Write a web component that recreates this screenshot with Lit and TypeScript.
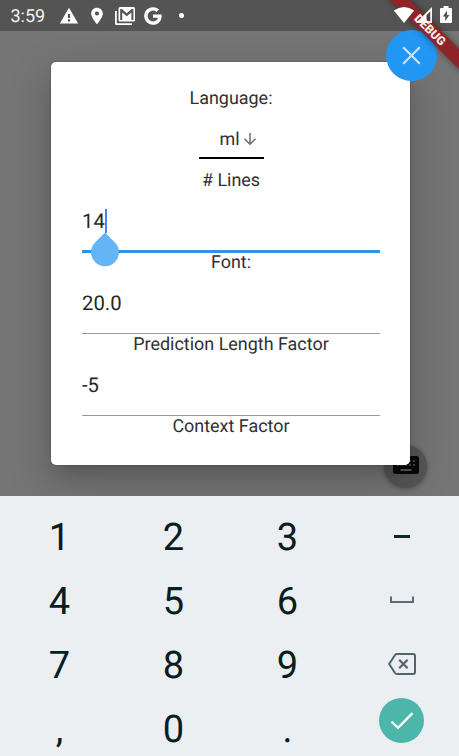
import { LitElement, html, css, svg } from "lit";
import { customElement } from "lit/decorators.js";

const statusIcons = {
  warning: svg`<path fill-rule="evenodd" d="M1 21h22L12 2 1 21zm12.300-2.500h-2.600v-2.500h2.600v2.500zm0-4h-2.600v-5h2.600v5z"/>`,
  pin: svg`<path fill-rule="evenodd" d="M12 2C8.130 2 5 5.130 5 9c0 5.250 7 13 7 13s7-7.750 7-13c0-3.870-3.130-7-7-7zm0 9.500a2.500 2.500 0 1 1 0-5 2.500 2.500 0 0 1 0 5z"/>`,
};

@customElement("status-bar")
class StatusBar extends LitElement {
  static styles = css`
    :host { display: flex; height: 31px; align-items: center; background: #545454; color: #fff; }
    svg { display: block; fill: currentColor; flex: none; }
    .time { width: 48px; margin-left: 10.500px; font-size: 18px; line-height: 31px; color: #f2f2f2; padding-top: 1px; }
    .warn { width: 20px; height: 20px; }
    .pin { width: 20px; height: 20px; margin-left: 8px; }
    .mail { margin-left: 8px; }
    .goog { margin-left: 9px; }
    .dot { width: 5px; height: 5px; border-radius: 50%; background: #fff; margin-left: 17px; }
  `;
  render() {
    return html`
      <div class="time">3:59</div>
      <svg class="warn" viewBox="0 0 24 24">${statusIcons.warning}</svg>
      <svg class="pin" viewBox="0 0 24 24">${statusIcons.pin}</svg>
      <svg class="mail" width="20" height="18" viewBox="0 0 20 18">
        <path d="M0 4h1.800v12.200H17V18H1.500Q0 18 0 16.500z"/>
        <path fill-rule="evenodd" d="M5 0h13.500Q20 0 20 1.500v11.500Q20 14.500 18.500 14.500H5Q3.500 14.500 3.500 13V1.500Q3.500 0 5 0zM5.200 2v11h2V5.500l4.600 3.700 4.600-3.700V13h2V2h-1.600l-5 4.200-5-4.200z"/>
      </svg>
      <svg class="goog" width="18" height="18" viewBox="0 0 18 18">
        <path d="M9 7.400h8.500c.1.500.150 1 .150 1.600C17.650 14.200 14.200 17.800 9 17.800A8.800 8.800 0 1 1 14.900 2.500l-2.500 2.400A5.400 5.400 0 0 0 9 3.600a5.400 5.400 0 0 0 0 10.800c3.200 0 4.600-2 4.900-3.700H9z"/>
      </svg>
      <div class="dot"></div>
    `;
  }
}

@customElement("settings-dialog")
class SettingsDialog extends LitElement {
  static styles = css`
    :host {
      display: block; box-sizing: border-box; width: 359px; height: 403px;
      padding: 26px 30px 0 31px; background: #fff; border-radius: 5px;
      box-shadow: 0 12px 18px -6px rgba(0,0,0,.14), 0 16px 40px 4px rgba(0,0,0,.17), 0 0 2px rgba(0,0,0,.3);
      color: #303030;
    }
    .label { height: 20px; line-height: 21px; text-align: center; font-size: 17.950px; white-space: nowrap; }
    .lower { line-height: 22px; }
    .picker { height: 62px; display: flex; justify-content: center; align-items: flex-start; }
    .select {
      box-sizing: border-box; width: 65px; height: 51px; padding: 13px 6px 0 21px;
      border-bottom: 2px solid #000; display: flex; align-items: center; font-size: 17.900px;
    }
    .select svg { margin-left: 3px; margin-top: -1px; flex: none; }
    .field {
      position: relative; box-sizing: border-box; height: 62px; padding-top: 1px; border-bottom: 1px solid #999;
      font-size: 20.300px; display: flex; align-items: center; color: #262626;
    }
    .field.focus { border-bottom: 3px solid #2d93ea; height: 63px; margin-bottom: -1px; }
    .caret { width: 2px; height: 24px; background: #4285f4; }
    .handle { position: absolute; left: 9px; top: 42px; }
  `;
  private field(value: string) {
    return html`<div class="field">${value}</div>`;
  }
  render() {
    return html`
      <div class="label">Language:</div>
      <div class="picker">
        <div class="select">ml
          <svg width="14" height="14" viewBox="0 0 14 14" fill="none" stroke="#6d6d6d" stroke-width="1.500">
            <path d="M7 1v11M1.500 6.800L7 12.200l5.500-5.400"/>
          </svg>
        </div>
      </div>
      <div class="label"># Lines</div>
      <div class="field focus">14<span class="caret"></span>
        <svg class="handle" width="28" height="36" viewBox="0 0 28 36" fill="#64b5f6">
          <path d="M14 .500L23.900 10.400A14 14 0 1 1 4.100 10.400z"/>
        </svg>
      </div>
      <div class="label lower">Font:</div>
      ${this.field("20.0")}
      <div class="label lower">Prediction Length Factor</div>
      ${this.field("-5")}
      <div class="label lower">Context Factor</div>
    `;
  }
}

@customElement("number-pad")
class NumberPad extends LitElement {
  static styles = css`
    :host {
      display: grid; box-sizing: border-box; height: 260px; padding: 9px 0 0 2.500px;
      grid-template-columns: repeat(4, 114px); grid-template-rows: repeat(4, 64px);
      background: #ebeff1; color: #071d22; overflow: hidden;
    }
    .key { display: flex; align-items: center; justify-content: center; font-size: 38px; line-height: 64px; }
    .digit { line-height: 66px; height: 66px; }
    .minus { width: 16px; height: 3px; background: #10272d; margin-top: -1px; margin-left: 1px; }
    .space { margin: -3px 0 0 1px; }
    .erase { margin: -2px 0 0 1px; }
    .done { width: 45px; height: 45px; border-radius: 50%; background: #4bb6a9; margin: -17px 0 0 0; display: flex; align-items: center; justify-content: center; }
    svg { display: block; fill: none; }
  `;
  render() {
    const key = (k: string) => html`<div class="key digit">${k}</div>`;
    return html`
      ${["1", "2", "3"].map(key)}
      <div class="key"><div class="minus"></div></div>
      ${["4", "5", "6"].map(key)}
      <div class="key">
        <svg class="space" width="26" height="8" viewBox="0 0 26 8" stroke="#5c6c72" stroke-width="2"><path d="M2 .500V6H24V.500"/></svg>
      </div>
      ${["7", "8", "9"].map(key)}
      <div class="key">
        <svg class="erase" width="28" height="22" viewBox="0 0 28 22" stroke="#53636a" stroke-width="2">
          <path d="M9 1H25Q27 1 27 3V19Q27 21 25 21H9Q7.800 21 7 20L1.200 11 7 2Q7.800 1 9 1z"/>
          <path d="M11.200 6.800l8.400 8.400M19.600 6.800l-8.400 8.400" stroke-width="2.200"/>
        </svg>
      </div>
      ${[",", "0", "."].map(key)}
      <div class="key">
        <div class="done">
          <svg width="24" height="20" viewBox="0 0 24 20" stroke="#fff" stroke-width="2.400"><path d="M1.500 10.500l6.500 6.300L22.500 2.200"/></svg>
        </div>
      </div>
    `;
  }
}

@customElement("app-root")
class AppRoot extends LitElement {
  static styles = css`
    :host { display: block; width: 459px; height: 756px; overflow: hidden; font-family: Roboto, sans-serif; text-rendering: geometricPrecision; }
    .screen { position: relative; height: 756px; overflow: hidden; display: flex; flex-direction: column; }
    .page { flex: 1; min-height: 0; position: relative; overflow: hidden; background: #757575; padding: 31px 0 0 51px; }
    settings-dialog { position: relative; }
    .fab {
      position: absolute; left: 384px; top: 414px; width: 43px; height: 43px; border-radius: 50%;
      background: #555; box-shadow: 0 1px 5px rgba(0,0,0,.3); display: flex; align-items: center; justify-content: center;
    }
    .fab svg { margin-top: -4px; }
    .close {
      position: absolute; left: 386px; top: 30px; width: 51px; height: 51px; border-radius: 50%;
      background: #2196f3; display: flex; align-items: center; justify-content: center;
    }
    .banner {
      position: absolute; left: 380px; top: 23px; width: 100px; height: 14px; transform: rotate(45deg);
      background: #8f2428; box-shadow: 0 0 6px rgba(0,0,0,.5);
      color: #f5e9e9; font-size: 12px; font-weight: 900; line-height: 14px; text-align: center;
    }
    .signals { position: absolute; left: 393px; top: 5px; display: flex; gap: 1px; }
    svg { display: block; }
  `;
  render() {
    return html`
      <div class="screen">
        <status-bar></status-bar>
        <div class="page">
          <div class="fab">
            <svg width="26" height="18" viewBox="0 0 26 18">
              <rect width="26" height="18" rx="2.500" fill="#080808"/>
              <path d="M4 5h18M4 9h18" stroke="#444" stroke-width="2" stroke-dasharray="2 2"/>
              <path d="M7.500 14h11" stroke="#555" stroke-width="2"/>
            </svg>
          </div>
          <settings-dialog></settings-dialog>
        </div>
        <number-pad></number-pad>
        <div class="close">
          <svg width="19" height="19" viewBox="0 0 19 19" stroke="#c5e3fb" stroke-width="2.200"><path d="M1.200 1.200l16.600 16.600M17.800 1.200L1.200 17.800"/></svg>
        </div>
        <div class="banner">DEBUG</div>
        <div class="signals">
          <svg width="22" height="20" viewBox="0 0 22 20" fill="#fff"><path d="M.800 5.500Q11-1.700 21.200 5.500L11 18z"/></svg>
          <svg width="18" height="20" viewBox="0 0 18 20" fill="#fff"><path fill-rule="evenodd" d="M0 18L16 2V18zM10.500 16.300h3.800V6.200l-3.800 3.800z"/></svg>
          <svg width="22" height="20" viewBox="0 0 22 20" fill="#fff"><path fill-rule="evenodd" d="M8.500 1h5v2H16q1 0 1 1v13q0 1-1 1H6q-1 0-1-1V4q0-1 1-1h2.500zM12 5.500L7.800 11.500h2.400V16l4.200-6h-2.400z"/></svg>
        </div>
      </div>
    `;
  }
}
